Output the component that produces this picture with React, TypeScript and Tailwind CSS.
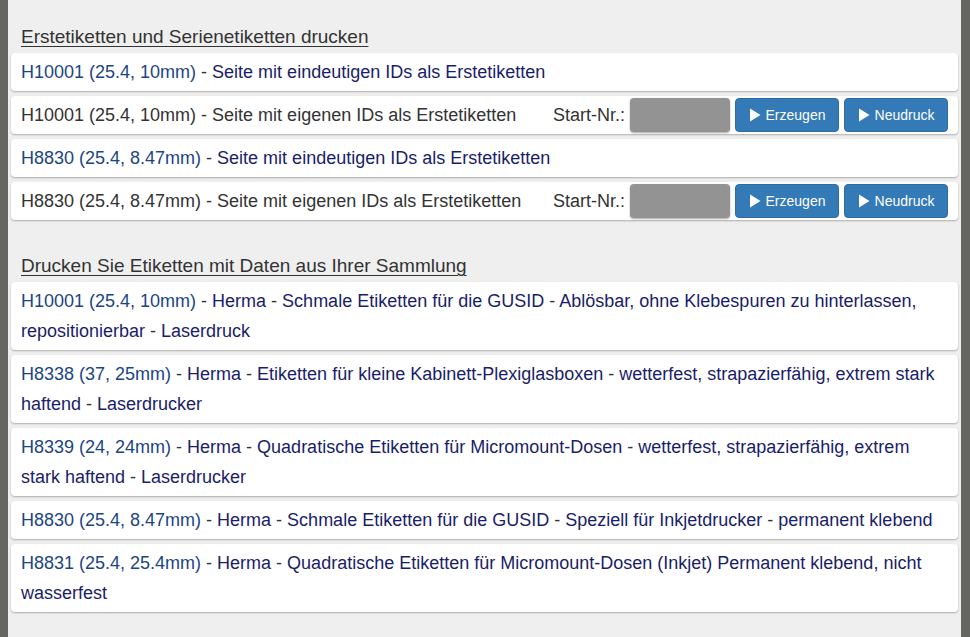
import React from "react";

const ID = "text-[#1b4585]";
const NAV = "text-[#1a1d6a]";
const DK = "text-[#333333]";

function Card({ children }: { children: React.ReactNode }) {
  return (
    <div className="bg-white rounded-[4px] shadow-[0_1px_2px_rgba(0,0,0,0.28)] px-[10px] py-[4px] leading-[30px]">
      {children}
    </div>
  );
}

function Play() {
  return (
    <svg width="12" height="14" viewBox="0 0 12 14" className="inline-block mr-[5px]">
      <path d="M1 0.5 L11.5 7 L1 13.5 Z" fill="white" />
    </svg>
  );
}

function StartRow({ id, text }: { id: string; text: string }) {
  return (
    <div className="bg-white rounded-[4px] shadow-[0_1px_2px_rgba(0,0,0,0.28)] pl-[10px] pr-[10px] py-[2px] flex items-center">
      <span className={`${DK} leading-[30px] flex-1 whitespace-nowrap`}>
        {id} - {text}
      </span>
      <span className={`${DK} mr-[5px] whitespace-nowrap`}>Start-Nr.:</span>
      <div className="w-[100px] h-[34px] bg-[#939393] rounded-[4px] shadow-[0_1px_2px_rgba(0,0,0,0.35)] mr-[5px] shrink-0" />
      <button className="w-[104px] h-[34px] shrink-0 bg-[#337ab7] border border-[#2e6da4] rounded-[4px] text-white text-[14px] flex items-center justify-center mr-[5px]">
        <Play />Erzeugen
      </button>
      <button className="w-[104px] h-[34px] shrink-0 bg-[#337ab7] border border-[#2e6da4] rounded-[4px] text-white text-[14px] flex items-center justify-center">
        <Play />Neudruck
      </button>
    </div>
  );
}

function LinkRow({ id, parts }: { id: string; parts: string[] }) {
  return (
    <Card>
      <span className={ID}>{id}</span>
      {parts.map((p, i) => (
        <React.Fragment key={i}>
          <span className={DK}> - </span>
          <span className={NAV}>{p}</span>
        </React.Fragment>
      ))}
    </Card>
  );
}

export default function App() {
  return (
    <div
      className="flex w-[970px] h-[637px] overflow-hidden text-[18px]"
      style={{ fontFamily: '"Liberation Sans", Arial, sans-serif' }}
    >
      <div className="w-[8px] bg-[#656662] shrink-0" />
      <div className="flex-1 bg-[#efefef] px-[3px] pt-[24px]">
        <h2 className={`${DK} underline underline-offset-[3px] decoration-1 pl-[10px] text-[19px] leading-[26px] mb-[3px]`}>
          Erstetiketten und Serienetiketten drucken
        </h2>
        <div className="flex flex-col gap-[5px]">
          <LinkRow id="H10001 (25.4, 10mm)" parts={["Seite mit eindeutigen IDs als Erstetiketten"]} />
          <StartRow id="H10001 (25.4, 10mm)" text="Seite mit eigenen IDs als Erstetiketten" />
          <LinkRow id="H8830 (25.4, 8.47mm)" parts={["Seite mit eindeutigen IDs als Erstetiketten"]} />
          <StartRow id="H8830 (25.4, 8.47mm)" text="Seite mit eigenen IDs als Erstetiketten" />
        </div>
        <h2 className={`${DK} underline underline-offset-[3px] decoration-1 pl-[10px] text-[19px] leading-[26px] mt-[33px] mb-[3px]`}>
          Drucken Sie Etiketten mit Daten aus Ihrer Sammlung
        </h2>
        <div className="flex flex-col gap-[5px]">
          <LinkRow
            id="H10001 (25.4, 10mm)"
            parts={["Herma", "Schmale Etiketten für die GUSID", "Ablösbar, ohne Klebespuren zu hinterlassen, repositionierbar", "Laserdruck"]}
          />
          <LinkRow
            id="H8338 (37, 25mm)"
            parts={["Herma", "Etiketten für kleine Kabinett-Plexiglasboxen", "wetterfest, strapazierfähig, extrem stark haftend", "Laserdrucker"]}
          />
          <LinkRow
            id="H8339 (24, 24mm)"
            parts={["Herma", "Quadratische Etiketten für Micromount-Dosen", "wetterfest, strapazierfähig, extrem stark haftend", "Laserdrucker"]}
          />
          <LinkRow
            id="H8830 (25.4, 8.47mm)"
            parts={["Herma", "Schmale Etiketten für die GUSID", "Speziell für Inkjetdrucker", "permanent klebend"]}
          />
          <LinkRow
            id="H8831 (25.4, 25.4mm)"
            parts={["Herma", "Quadratische Etiketten für Micromount-Dosen (Inkjet) Permanent klebend, nicht wasserfest"]}
          />
        </div>
      </div>
      <div className="w-[9px] bg-[#656662] shrink-0" />
    </div>
  );
}
